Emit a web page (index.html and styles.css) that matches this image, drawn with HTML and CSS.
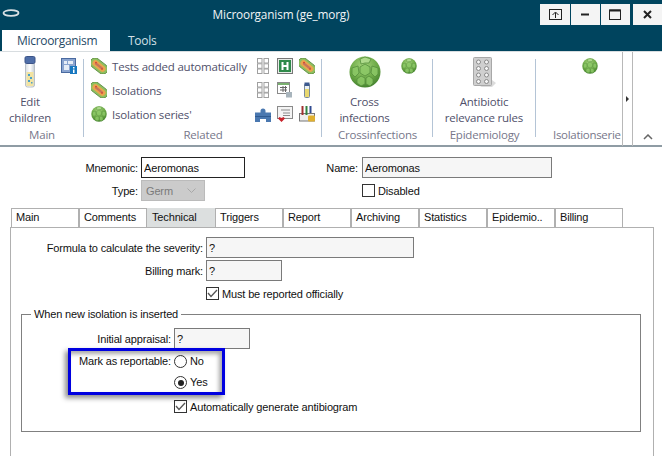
FILE: index.html
```html
<!DOCTYPE html>
<html lang="en">

<head>
    <meta charset="UTF-8">
    <meta name="viewport" content="width=device-width, initial-scale=1.0">
    <title>Microorganism (ge_morg)</title>
    <link rel="stylesheet" href="styles.css">
</head>

<body>
    <svg class="defs" width="0" height="0">
        <defs>
            <radialGradient id="ballFill" cx="45%" cy="30%" r="75%">
                <stop offset="0" stop-color="#a5d47c" />
                <stop offset="0.6" stop-color="#6aa844" />
                <stop offset="1" stop-color="#3f7c2c" />
            </radialGradient>
            <linearGradient id="tubeFill" x1="0" y1="0" x2="1" y2="0">
                <stop offset="0" stop-color="#d8dde2" />
                <stop offset="0.5" stop-color="#ffffff" />
                <stop offset="1" stop-color="#c4ccd4" />
            </linearGradient>
            <symbol id="i-ball" viewBox="0 0 32 32">
                <circle cx="16" cy="16" r="15.500" fill="url(#ballFill)" />
                <g fill="#8cc866" fill-opacity="0.85" stroke="#568f3c" stroke-width="0.800">
                    <path d="M11 11l5-3 5 3 0 6-5 3-5-3z" />
                    <path d="M3 12l6-2 1 7-4 4-3-3z" />
                    <path d="M29 12l-6-2-1 7 4 4 3-3z" />
                    <path d="M8 23l4-3 4 2 0 6-4 2-4-3z" />
                    <path d="M24 23l-4-3-3 2 0 6 4 2 3-3z" />
                    <path d="M11 3l5-2 6 2-2 4-4 0-4 1z" fill="#b4de92" />
                </g>
            </symbol>
            <symbol id="i-bact" viewBox="0 0 16 16">
                <rect x="-2" y="3" width="20" height="10" rx="5" transform="rotate(38 8 8)" fill="#8fc060" stroke="#55863a" stroke-width="0.800" />
                <rect x="0.500" y="5" width="15" height="6" rx="3" transform="rotate(38 8 8)" fill="#e9a54e" />
                <rect x="3" y="6.800" width="10" height="2.400" rx="1.200" transform="rotate(38 8 8)" fill="#c9745a" />
                <circle cx="5" cy="4.500" r="0.800" fill="#d8302c" />
                <circle cx="11" cy="11" r="0.800" fill="#d8302c" />
            </symbol>
            <symbol id="i-tube" viewBox="0 0 12 32">
                <rect x="1.500" y="7" width="9" height="24" rx="2" fill="url(#tubeFill)" stroke="#b8c0c8" />
                <rect x="2.500" y="16" width="7" height="14" fill="#f2e3a0" />
                <g fill="#4aa0c8">
                    <rect x="4" y="18" width="2" height="2" />
                    <rect x="6" y="21" width="2" height="2" />
                    <rect x="4" y="24" width="2" height="2" />
                    <rect x="7" y="26" width="1.500" height="1.500" />
                </g>
                <rect x="1" y="0.500" width="10" height="7" rx="1.500" fill="#4f6ea8" stroke="#3c5488" />
            </symbol>
            <symbol id="i-grid" viewBox="0 0 16 16">
                <g fill="#fff" stroke="#a0a0a0">
                    <rect x="2.500" y="0.500" width="4.500" height="4.500" />
                    <rect x="9" y="0.500" width="4.500" height="4.500" />
                    <rect x="2.500" y="5.800" width="4.500" height="4.500" />
                    <rect x="9" y="5.800" width="4.500" height="4.500" />
                    <rect x="2.500" y="11" width="4.500" height="4.500" />
                    <rect x="9" y="11" width="4.500" height="4.500" />
                </g>
            </symbol>
        </defs>
    </svg>

    <div class="window">
        <header class="titlebar">
            <svg class="logo" width="18" height="8" viewBox="0 0 18 8">
                <ellipse cx="9" cy="4" rx="7.500" ry="2.800" fill="none" stroke="#d8e0e4" stroke-width="1.800" />
            </svg>
            <div class="title">Microorganism (ge_morg)</div>
            <div class="winbtns">
                <button class="winbtn">
                    <svg width="13" height="11" viewBox="0 0 13 11">
                        <rect x="0.500" y="0.500" width="12" height="10" fill="none" stroke="#222" />
                        <path d="M6.500 9V3.500M3.500 6l3-3 3 3" fill="none" stroke="#222" />
                    </svg>
                </button>
                <button class="winbtn">
                    <svg width="9" height="3" viewBox="0 0 9 3"><rect width="8" height="2" y="0.500" fill="#222" /></svg>
                </button>
                <button class="winbtn">
                    <svg width="13" height="11" viewBox="0 0 13 11">
                        <rect x="0.500" y="1" width="11" height="9.500" fill="none" stroke="#222" />
                        <rect x="0.500" y="0.500" width="11" height="2" fill="#222" />
                    </svg>
                </button>
                <button class="winbtn winbtn-close">
                    <svg width="9" height="9" viewBox="0 0 9 9"><path d="M1 1l7 7M8 1l-7 7" stroke="#222" stroke-width="2" /></svg>
                </button>
            </div>
        </header>

        <nav class="ribbon-tabs">
            <div class="rtab rtab-active">Microorganism</div>
            <div class="rtab">Tools</div>
        </nav>

        <section class="ribbon">
            <div class="group group-main">
                <div class="group-body">
                    <div class="bigbtn bigbtn-edit">
                        <svg class="bigicon" width="12" height="32"><use href="#i-tube" /></svg>
                        <span>Edit<br>children</span>
                    </div>
                    <svg class="chip" width="16" height="16" viewBox="0 0 16 16">
                        <rect x="0.500" y="0.500" width="14" height="14" fill="#8aa4d0" stroke="#4a6aa0" />
                        <rect x="3" y="3" width="3" height="3" fill="#e6ecf6" />
                        <rect x="7" y="3" width="5" height="3" fill="#e6ecf6" />
                        <rect x="3" y="7" width="5" height="5" fill="#e6ecf6" />
                        <rect x="9" y="8" width="7" height="8" fill="#1878c0" />
                        <rect x="12" y="9" width="1.500" height="1.500" fill="#fff" />
                        <rect x="12" y="11.500" width="1.500" height="3.500" fill="#fff" />
                    </svg>
                </div>
                <div class="group-label">Main</div>
            </div>

            <div class="group group-related">
                <div class="group-body">
                    <ul class="linklist">
                        <li><svg width="16" height="16"><use href="#i-bact" /></svg>Tests added automatically</li>
                        <li><svg width="16" height="16"><use href="#i-bact" /></svg>Isolations</li>
                        <li><svg width="16" height="16"><use href="#i-ball" /></svg>Isolation series'</li>
                    </ul>
                    <div class="icongrid">
                        <svg width="16" height="16"><use href="#i-grid" /></svg>
                        <svg width="16" height="16" viewBox="0 0 16 16">
                            <rect x="0.500" y="0.500" width="15" height="15" fill="#e8ece8" stroke="#777" />
                            <rect x="2" y="2" width="12" height="12" fill="#2f8a4a" />
                            <path d="M5.500 4v8M10.500 4v8M5.500 8h5" stroke="#fff" stroke-width="2" fill="none" />
                        </svg>
                        <svg width="16" height="16"><use href="#i-bact" /></svg>
                        <svg width="16" height="16"><use href="#i-grid" /></svg>
                        <svg width="16" height="16" viewBox="0 0 16 16">
                            <rect x="0.500" y="0.500" width="12" height="11" fill="#fff" stroke="#8a8a8a" />
                            <rect x="1" y="1" width="11" height="2" fill="#7ab070" />
                            <path d="M3 5.500h7M3 8h7M6 4v6M8.500 4v6" stroke="#666" />
                            <rect x="9" y="10" width="6" height="5.500" fill="#a8b4bc" />
                        </svg>
                        <svg width="16" height="16" viewBox="0 0 16 16">
                            <rect x="5.500" y="2" width="5" height="13.500" rx="1" fill="#e8f0f4" stroke="#7a8a9a" />
                            <rect x="6" y="7" width="4" height="8" fill="#e8d870" />
                            <rect x="5.500" y="0.500" width="5" height="3.500" fill="#3c5a90" />
                        </svg>
                        <svg width="16" height="16" viewBox="0 0 16 16">
                            <path d="M0 6.500h5.500V5a2.500 2.500 0 1 1 5 0v1.500H16V16H11v-3H5v3H0z" fill="#4a78b0" />
                            <rect x="0" y="10" width="16" height="1" fill="#2f5a90" />
                        </svg>
                        <svg width="16" height="16" viewBox="0 0 16 16">
                            <rect x="0.500" y="0.500" width="15" height="12" fill="#f4f4f4" stroke="#8a8a8a" />
                            <path d="M4 4h9M6 7h7M6 9.500h7" stroke="#8a8a8a" />
                            <path d="M4.500 16L1 12.500 2.500 11 4.500 12l2-1L8 12.500z" fill="#c8242c" />
                        </svg>
                        <svg width="16" height="16" viewBox="0 0 16 16">
                            <rect x="0.500" y="7.500" width="15" height="7.500" fill="#eee" stroke="#777" />
                            <path d="M3.500 0v9" stroke="#a03030" stroke-width="2" />
                            <path d="M7.500 0v9" stroke="#308040" stroke-width="2" />
                            <path d="M11.500 0v7" stroke="#304a90" stroke-width="2" />
                            <rect x="9" y="9.500" width="7" height="6" rx="1" fill="#e0b030" />
                        </svg>
                    </div>
                </div>
                <div class="group-label">Related</div>
            </div>

            <div class="group group-cross">
                <div class="group-body">
                    <div class="bigbtn bigbtn-cross">
                        <svg class="bigicon" width="32" height="32"><use href="#i-ball" /></svg>
                        <span>Cross<br>infections</span>
                    </div>
                    <svg class="chip" width="16" height="16"><use href="#i-ball" /></svg>
                </div>
                <div class="group-label">Crossinfections</div>
            </div>

            <div class="group group-epi">
                <div class="group-body">
                    <div class="bigbtn bigbtn-epi">
                        <svg class="bigicon" width="24" height="32" viewBox="0 0 24 32">
                            <path d="M20 24l4 3-4 4H8z" fill="#dcdcdc" />
                            <rect x="1.500" y="1.500" width="18" height="28" rx="1" fill="#cfcfcf" stroke="#a8a8a8" />
                            <g fill="#f6f6f6" stroke="#8a8a8a">
                                <circle cx="6.500" cy="6" r="2" />
                                <circle cx="14.500" cy="6" r="2" />
                                <circle cx="6.500" cy="12.500" r="2" />
                                <circle cx="14.500" cy="12.500" r="2" />
                                <circle cx="6.500" cy="19" r="2" />
                                <circle cx="14.500" cy="19" r="2" />
                                <circle cx="6.500" cy="25.500" r="2" />
                                <circle cx="14.500" cy="25.500" r="2" />
                            </g>
                        </svg>
                        <span>Antibiotic<br>relevance rules</span>
                    </div>
                </div>
                <div class="group-label">Epidemiology</div>
            </div>

            <div class="group group-series">
                <div class="group-body">
                    <svg class="chip" width="16" height="16"><use href="#i-ball" /></svg>
                </div>
                <div class="group-label">Isolationserie</div>
            </div>

            <div class="scroller"><span class="arrow-right"></span></div>
            <div class="collapse">
                <svg width="10" height="6" viewBox="0 0 10 6"><path d="M1 5l4-4 4 4" fill="none" stroke="#666" stroke-width="1.500" /></svg>
            </div>
        </section>

        <main class="content">
            <div class="head-form">
                <label class="lbl">Mnemonic:</label>
                <input class="field field-mnemonic" type="text" value="Aeromonas">
                <label class="lbl">Name:</label>
                <input class="field field-name" type="text" value="Aeromonas">
                <label class="lbl">Type:</label>
                <div class="combo">Germ
                    <svg width="9" height="5" viewBox="0 0 9 5"><path d="M0.500 0.500l4 4 4-4" fill="none" stroke="#a8a8a8" /></svg>
                </div>
                <span></span>
                <label class="check"><span class="box"></span>Disabled</label>
            </div>

            <div class="tabs">
                <div class="tab">Main</div>
                <div class="tab">Comments</div>
                <div class="tab tab-active">Technical</div>
                <div class="tab">Triggers</div>
                <div class="tab">Report</div>
                <div class="tab">Archiving</div>
                <div class="tab">Statistics</div>
                <div class="tab">Epidemio..</div>
                <div class="tab">Billing</div>
            </div>

            <div class="panel">
                <div class="tech-form">
                    <label class="lbl">Formula to calculate the severity:</label>
                    <input class="field field-formula" type="text" value="?">
                    <label class="lbl">Billing mark:</label>
                    <input class="field field-short" type="text" value="?">
                    <span></span>
                    <label class="check">
                        <span class="box"><svg width="11" height="9" viewBox="0 0 11 9"><path d="M1 4l3 3.500L10 1" fill="none" stroke="#555" stroke-width="1.300" /></svg></span>
                        Must be reported officially
                    </label>
                </div>

                <fieldset class="isolation">
                    <legend>When new isolation is inserted</legend>
                    <div class="iso-form">
                        <label class="lbl">Initial appraisal:</label>
                        <input class="field field-short" type="text" value="?">
                        <label class="lbl">Mark as reportable:</label>
                        <label class="radio"><span class="dot"></span>No</label>
                        <span></span>
                        <label class="radio"><span class="dot dot-on"></span>Yes</label>
                        <span></span>
                        <label class="check check-auto">
                            <span class="box"><svg width="11" height="9" viewBox="0 0 11 9"><path d="M1 4l3 3.500L10 1" fill="none" stroke="#555" stroke-width="1.300" /></svg></span>
                            Automatically generate antibiogram
                        </label>
                    </div>
                    <div class="highlight"></div>
                </fieldset>
            </div>
        </main>
    </div>
</body>

</html>
```

FILE: styles.css
```css
* {
    box-sizing: border-box;
}

html,
body {
    margin: 0;
    background: #fff;
}

.defs {
    position: absolute;
}

.window {
    width: 662px;
    height: 456px;
    overflow: hidden;
    display: flex;
    flex-direction: column;
    font: 11px "Liberation Sans", Arial, sans-serif;
    letter-spacing: -0.15px;
    color: #111;
}

/* barra de titulo */
.titlebar {
    height: 30px;
    flex: none;
    background: #00445e;
    display: flex;
    align-items: flex-start;
    color: #f0f4f6;
    font: 11.800px "Open Sans", sans-serif;
    letter-spacing: -0.15px;
}

.logo {
    margin: 9px 0 0 2px;
    flex: none;
}

.title {
    flex: 1;
    text-align: center;
    padding: 6px 0 0 2px;
    white-space: nowrap;
}

.winbtns {
    display: flex;
    padding-top: 4px;
}

.winbtn {
    width: 29px;
    height: 21px;
    margin-left: 1px;
    padding: 0;
    border: 0;
    background: #f4f4f4;
    display: flex;
    align-items: center;
    justify-content: center;
}

.winbtn:first-child {
    width: 30px;
    margin-left: 0;
}

.winbtn-close {
    margin-left: 3px;
}

/* abas do ribbon */
.ribbon-tabs {
    height: 21px;
    flex: none;
    background: #00445e;
    display: flex;
    padding-left: 2px;
    font: 12px "Open Sans", sans-serif;
    letter-spacing: -0.3px;
}

.rtab {
    color: #d4e0e6;
    padding: 2px 0 0 18px;
}

.rtab-active {
    width: 108px;
    padding-left: 15px;
    background: #fff;
    color: #1f4a66;
}

.ribbon {
    height: 96px;
    flex: none;
    display: flex;
    background: #fff;
    border-top: 1px solid #d8dde0;
    border-bottom: 2px solid #8f9ca4;
    font: 11.500px "Open Sans", sans-serif;
    letter-spacing: -0.2px;
    color: #50506a;
}

.group {
    display: flex;
    flex-direction: column;
    position: relative;
    flex: none;
}

.group::after {
    content: "";
    position: absolute;
    right: 0;
    top: 7px;
    bottom: 8px;
    width: 1px;
    background: #b4c4d6;
}

.group-body {
    height: 75px;
    display: flex;
    position: relative;
    flex: none;
}

.group-label {
    text-align: center;
    color: #77778a;
    line-height: 16px;
    white-space: nowrap;
}

.group-main {
    width: 84px;
}

.group-related {
    width: 238px;
}

.group-cross {
    width: 111px;
}

.group-epi {
    width: 103px;
}

.group-series {
    width: 86px;
}

.group-series .group-label {
    text-align: left;
    padding-left: 17px;
    letter-spacing: -0.3px;
}

.group-series::after {
    display: none;
}

.bigbtn {
    display: flex;
    flex-direction: column;
    align-items: center;
    text-align: center;
    line-height: 16px;
    white-space: nowrap;
    padding-top: 4px;
}

.bigicon {
    margin-bottom: 6px;
    flex: none;
}

.bigbtn-edit {
    width: 60px;
}

.bigbtn-cross {
    width: 73px;
    margin-left: 6px;
}

.bigbtn-epi {
    width: 102px;
}

.chip {
    margin-top: 6px;
    flex: none;
}

.group-main .chip {
    margin-left: 1px;
}

.group-series .chip {
    margin-left: 46px;
}

.linklist {
    list-style: none;
    margin: 2px 0 0 7px;
    padding: 0;
    width: 164px;
    flex: none;
    white-space: nowrap;
}

.linklist li {
    height: 24px;
    display: flex;
    align-items: center;
    gap: 5px;
}

.linklist svg {
    flex: none;
}

.icongrid {
    display: grid;
    grid-template-columns: repeat(3, 16px);
    grid-auto-rows: 24px;
    column-gap: 6px;
    margin: 2px 0 0 0;
    align-items: center;
}

.scroller {
    width: 11px;
    flex: none;
    border-left: 1px solid #b8b8b8;
    border-right: 1px solid #b8b8b8;
    display: flex;
    align-items: center;
    justify-content: center;
    margin-bottom: -1px;
}

.arrow-right {
    border-left: 3px solid #333;
    border-top: 3px solid transparent;
    border-bottom: 3px solid transparent;
}

.collapse {
    flex: 1;
    display: flex;
    align-items: flex-end;
    justify-content: center;
    padding-bottom: 5px;
}

/* formulario */
.content {
    flex: 1;
    min-height: 0;
    padding-top: 10px;
}

.lbl {
    text-align: right;
    white-space: nowrap;
}

.field {
    height: 21px;
    padding: 0 2px;
    border: 1px solid #7a7a7a;
    background: #f6f6f6;
    font: inherit;
    letter-spacing: inherit;
    color: #111;
    outline: none;
}

.head-form {
    display: grid;
    grid-template-columns: 138px 104px 110px 190px;
    column-gap: 3px;
    row-gap: 2px;
    align-items: center;
}

.field-mnemonic {
    width: 104px;
    border-color: #222;
    background: #fff;
}

.field-name {
    width: 190px;
    margin-left: 1px;
}

.combo {
    width: 64px;
    height: 21px;
    background: #cbcbcb;
    border: 1px solid #bbb;
    color: #7a7a7a;
    padding-left: 4px;
    display: flex;
    align-items: center;
    justify-content: space-between;
    padding-right: 8px;
}

.check,
.radio {
    display: flex;
    align-items: center;
    white-space: nowrap;
    gap: 3px;
}

.head-form .check {
    margin-left: 1px;
}

.box {
    width: 13px;
    height: 13px;
    border: 1px solid #333;
    background: #fff;
    display: flex;
    align-items: center;
    justify-content: center;
    flex: none;
}

.tabs {
    display: flex;
    margin: 7px 0 0 11px;
    height: 19px;
}

.tab {
    width: 68px;
    border: 1px solid #b0b0b0;
    border-bottom: 0;
    padding: 2px 0 0 4px;
    background: #fff;
}

.tab-active {
    background: #dcdfdf;
    border-color: #dcdfdf;
}

.panel {
    width: 644px;
    height: 240px;
    margin-left: 10px;
    border: 1px solid #b0b0b0;
    padding: 9px 12px 0 10px;
}

.tech-form {
    display: grid;
    grid-template-columns: 182px 1fr;
    column-gap: 3px;
    row-gap: 2px;
    align-items: center;
}

.field-formula {
    width: 208px;
}

.field-short {
    width: 76px;
}

.tech-form .check {
    height: 21px;
}

.isolation {
    position: relative;
    margin: 4px 0 0 0;
    padding: 0;
    height: 124px;
    border: 1px solid #808080;
}

.isolation legend {
    margin-left: 9px;
    padding: 0 3px;
}

.iso-form {
    display: grid;
    grid-template-columns: 149px 1fr;
    column-gap: 3px;
    row-gap: 0;
    align-items: center;
    padding-top: 8px;
}

.iso-form .field {
    margin-bottom: 2px;
}

.iso-form .lbl,
.iso-form .radio {
    min-height: 21px;
    line-height: 21px;
}

.check-auto {
    margin-top: 7px;
}

.dot {
    width: 13px;
    height: 13px;
    border: 1px solid #333;
    border-radius: 50%;
    background: #fff;
    display: inline-block;
    flex: none;
    position: relative;
}

.dot-on::after {
    content: "";
    position: absolute;
    inset: 2.500px;
    border-radius: 50%;
    background: #222;
}

/* destaque azul sobre o formulario */
.highlight {
    position: absolute;
    left: 46px;
    top: 28px;
    width: 157px;
    height: 47px;
    border: 3px solid #0000e0;
    box-shadow: -3px 3px 5px rgba(0, 0, 0, 0.45), inset -3px 3px 4px rgba(0, 0, 0, 0.35);
}
```
